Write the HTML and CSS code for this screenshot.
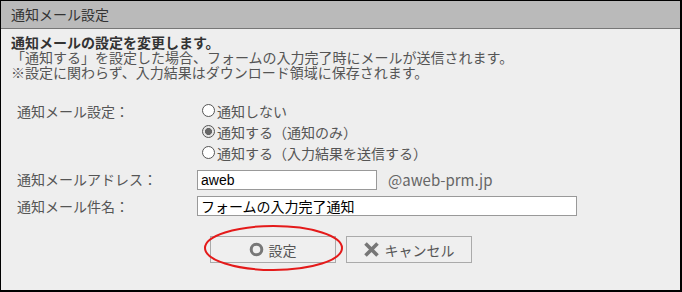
FILE: index.html
```html
<!DOCTYPE html>
<html lang="ja">
<head>
    <meta charset="UTF-8">
    <meta name="viewport" content="width=device-width, initial-scale=1.0">
    <title>通知メール設定</title>
    <link rel="stylesheet" href="styles.css">
</head>
<body>

    <div class="panel">
        <!-- Panel title -->
        <div class="panel-head">通知メール設定</div>

        <div class="panel-body">
            <div class="intro">
                <p class="lead">通知メールの設定を変更します。</p>
                <p>「通知する」を設定した場合、フォームの入力完了時にメールが送信されます。</p>
                <p>※設定に関わらず、入力結果はダウンロード領域に保存されます。</p>
            </div>

            <!-- Settings form -->
            <div class="form">
                <div class="label radio-label">通知メール設定：</div>
                <div class="options">
                    <label class="option"><input type="radio" name="notify" value="0">通知しない</label>
                    <label class="option"><input type="radio" name="notify" value="1" checked>通知する（通知のみ）</label>
                    <label class="option"><input type="radio" name="notify" value="2">通知する（入力結果を送信する）</label>
                </div>

                <div class="label">通知メールアドレス：</div>
                <div class="field">
                    <input class="text-input address" type="text" value="aweb">
                    <span class="domain">@aweb-prm.jp</span>
                </div>

                <div class="label">通知メール件名：</div>
                <div class="field">
                    <input class="text-input subject" type="text" value="フォームの入力完了通知">
                </div>
            </div>

            <!-- Buttons -->
            <div class="buttons">
                <span class="btn-wrap">
                    <button class="btn" type="button">
                        <svg class="icon" width="15" height="15" viewBox="0 0 15 15"><circle cx="7.5" cy="7.5" r="5.3" fill="none" stroke="#777" stroke-width="3"/></svg>
                        設定
                    </button>
                    <svg class="mark" width="141" height="48" viewBox="0 0 141 48"><ellipse cx="70.5" cy="24" rx="68.5" ry="22" fill="none" stroke="#e41a1a" stroke-width="2"/></svg>
                </span>
                <button class="btn" type="button">
                    <svg class="icon" width="17" height="15" viewBox="0 0 17 15"><path d="M2.5 1.5 L14.5 13.5 M14.5 1.5 L2.5 13.5" stroke="#777" stroke-width="3.6" fill="none"/></svg>
                    キャンセル
                </button>
            </div>
        </div>
    </div>

</body>
</html>
```

FILE: styles.css
```css
/* General page */
body {
    margin: 0;
    font-family: "Noto Sans CJK JP", sans-serif;
    font-size: 14px;
    color: #444;
}

/* Panel frame */
.panel {
    width: 682px;
    height: 292px;
    box-sizing: border-box;
    border-style: solid;
    border-color: #000;
    border-width: 1px 2px 2px 1px;
    background: #eeeeee;
    overflow: hidden;
}

.panel-head {
    height: 27px;
    line-height: 27px;
    padding-left: 10px;
    background: #bababa;
    border-bottom: 1px solid #777;
    color: #333;
}

.panel-body {
    padding: 6px 10px 0 10px;
}

/* Description lines */
.intro p {
    margin: 0;
    line-height: 15px;
    color: #555;
}

.intro .lead {
    font-weight: bold;
    color: #333;
}

/* Form grid */
.form {
    display: grid;
    grid-template-columns: 180px 1fr;
    row-gap: 6px;
    margin: 20px 0 0 6px;
    color: #555;
}

.label {
    display: flex;
    align-items: center;
    height: 20px;
}

.radio-label {
    height: 21px;
}

.options {
    display: flex;
    flex-direction: column;
}

.option {
    display: flex;
    align-items: center;
    height: 21px;
}

.option input {
    appearance: none;
    width: 13px;
    height: 13px;
    margin: 0 2px 0 5px;
    border: 1px solid #555;
    border-radius: 50%;
    background: #fff;
    box-sizing: border-box;
}

.option input:checked {
    background: radial-gradient(circle, #666 0, #666 3.2px, #e6e6e6 3.8px);
}

.field {
    display: flex;
    align-items: center;
}

.text-input {
    height: 20px;
    box-sizing: border-box;
    border: 1px solid #999;
    background: #fff;
    padding: 0 3px;
    margin: 0;
    font-family: "Liberation Sans", "Noto Sans CJK JP", sans-serif;
    font-size: 14px;
    color: #000;
    outline: none;
}

.address {
    width: 180px;
}

.subject {
    width: 380px;
}

.domain {
    margin-left: 11px;
    color: #666;
    font-size: 15px;
}

/* Button row */
.buttons {
    display: flex;
    justify-content: center;
    gap: 10px;
    margin-top: 20px;
}

.btn-wrap {
    position: relative;
    display: flex;
}

.btn {
    display: flex;
    align-items: center;
    justify-content: center;
    gap: 5px;
    width: 126px;
    height: 27px;
    padding: 0;
    border: 1px solid #aaa;
    background: #efefef;
    font-family: "Noto Sans CJK JP", sans-serif;
    font-size: 14px;
    color: #555;
}

.icon {
    display: block;
}

/* Red annotation circle */
.mark {
    position: absolute;
    left: -7px;
    top: -12px;
    pointer-events: none;
}
```
